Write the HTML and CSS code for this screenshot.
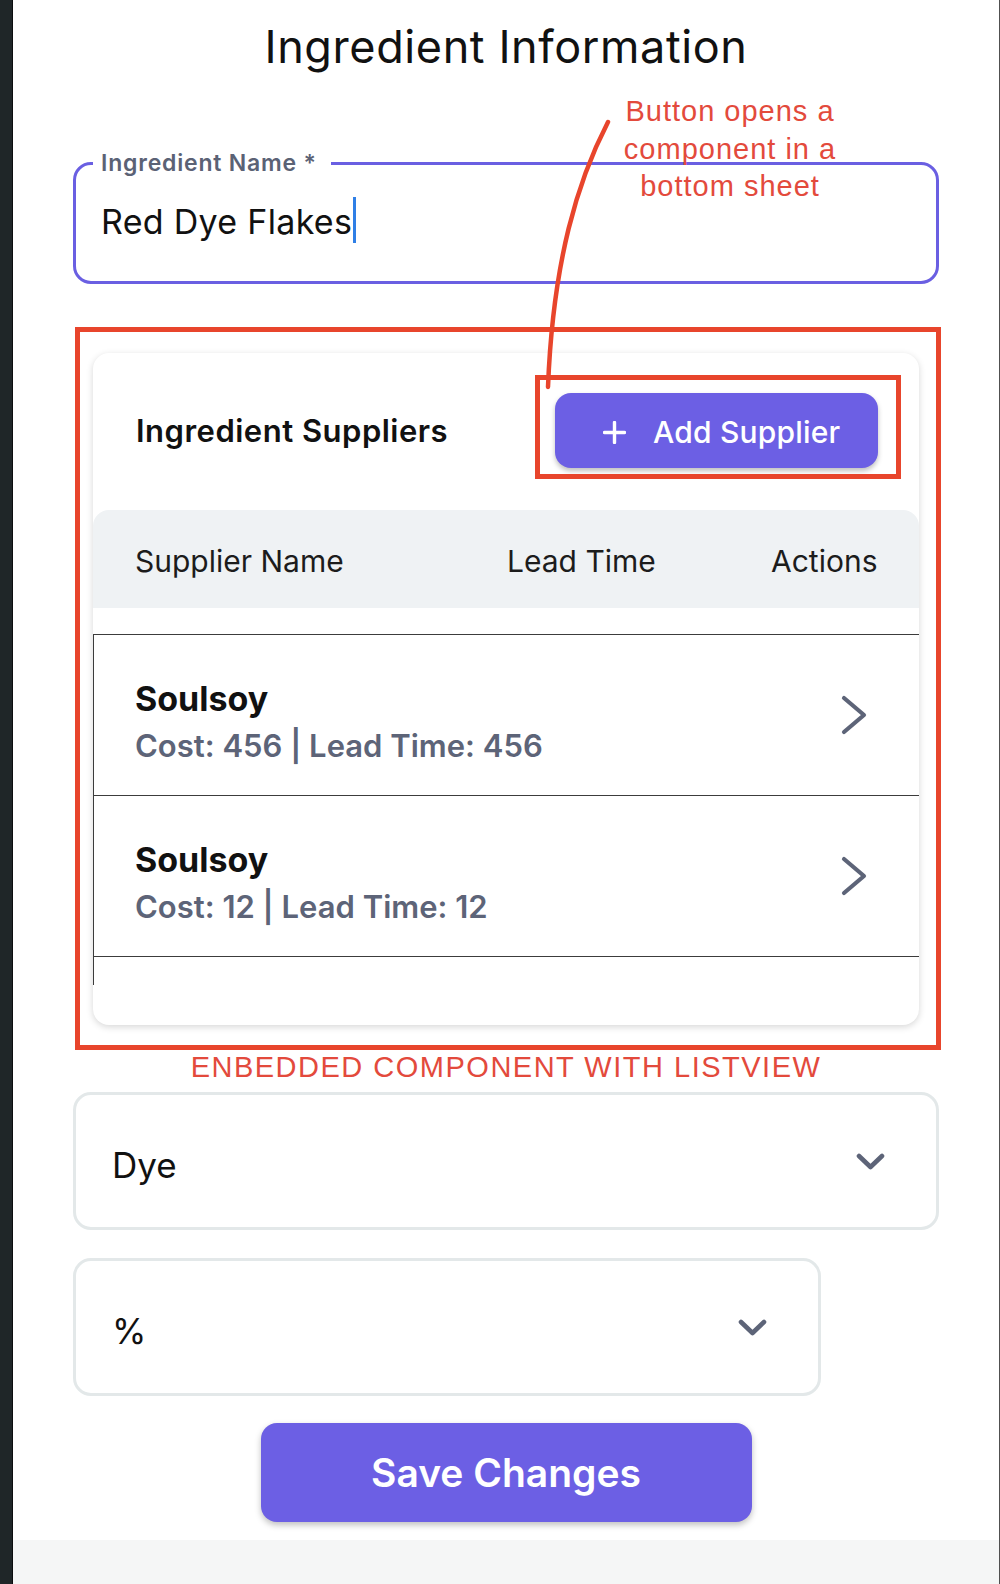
FILE: index.html
```html
<!DOCTYPE html>
<html lang="en">
<head>
<meta charset="utf-8">
<title>Ingredient Information</title>
<link rel="stylesheet" href="styles.css">
</head>
<body>
<div class="frame">
  <div class="strip"></div>
  <main class="page">
    <h1 class="title">Ingredient Information</h1>

    <fieldset class="name-field">
      <legend class="name-label">Ingredient Name *</legend>
      <div class="name-value">Red Dye Flakes<span class="caret"></span></div>
    </fieldset>

    <div class="embed-frame">
      <section class="card">
        <div class="card-head">
          <h2 class="card-title">Ingredient Suppliers</h2>
          <button class="add-btn" type="button">
            <svg class="plus" width="23" height="23" viewBox="0 0 23 23"><path d="M11.5 1.5V21.5M1.5 11.5H21.5" stroke="#fff" stroke-width="3.4" stroke-linecap="round"/></svg>
            <span>Add Supplier</span>
          </button>
        </div>
        <div class="table-head">
          <span>Supplier Name</span>
          <span>Lead Time</span>
          <span>Actions</span>
        </div>
        <ul class="list">
          <li class="row">
            <div class="row-text">
              <div class="row-name">Soulsoy</div>
              <div class="row-meta">Cost: 456 | Lead Time: 456</div>
            </div>
            <svg class="chev-right" width="26" height="40" viewBox="0 0 26 40"><path d="M3 3L23 20L3 37" fill="none" stroke="#5d6478" stroke-width="4.2" stroke-linecap="round" stroke-linejoin="round"/></svg>
          </li>
          <li class="row">
            <div class="row-text">
              <div class="row-name">Soulsoy</div>
              <div class="row-meta">Cost: 12 | Lead Time: 12</div>
            </div>
            <svg class="chev-right" width="26" height="40" viewBox="0 0 26 40"><path d="M3 3L23 20L3 37" fill="none" stroke="#5d6478" stroke-width="4.2" stroke-linecap="round" stroke-linejoin="round"/></svg>
          </li>
        </ul>
      </section>
    </div>

    <p class="embed-note">ENBEDDED COMPONENT WITH LISTVIEW</p>

    <div class="select select-wide">
      <span class="select-value">Dye</span>
      <svg class="chev-down" width="29" height="17" viewBox="0 0 29 17"><path d="M3 3L14.5 14L26 3" fill="none" stroke="#5d6478" stroke-width="4.6" stroke-linecap="round" stroke-linejoin="round"/></svg>
    </div>
    <div class="select select-narrow">
      <span class="select-value">%</span>
      <svg class="chev-down" width="29" height="17" viewBox="0 0 29 17"><path d="M3 3L14.5 14L26 3" fill="none" stroke="#5d6478" stroke-width="4.6" stroke-linecap="round" stroke-linejoin="round"/></svg>
    </div>

    <button class="save" type="button">Save Changes</button>

    <div class="footer"></div>

    <div class="note">Button opens a<br>component in a<br>bottom sheet</div>
    <svg class="curve" width="986" height="420" viewBox="0 0 986 420"><path d="M595 122C565 180 540 260 535 387" fill="none" stroke="#e8452c" stroke-width="4.5" stroke-linecap="round"/></svg>
    <div class="btn-callout"></div>
  </main>
</div>
</body>
</html>
```

FILE: styles.css
```css
* { box-sizing: border-box; }

html, body {
  margin: 0;
  padding: 0;
  background: #ffffff;
}

body {
  font-family: Inter, "Noto Sans", sans-serif;
  color: #111111;
}

.frame {
  display: flex;
  height: 1584px;
  overflow: hidden;
}

.strip {
  width: 13px;
  flex: none;
  background: #1f2628;
  border-right: 1px solid #0b0d0e;
}

.page {
  position: relative;
  flex: 1;
  display: flex;
  flex-direction: column;
  padding: 21px 60px 0;
  border-right: 1px solid #505050;
  background: #ffffff;
}

.title {
  margin: 0;
  font-weight: 400;
  font-size: 45px;
  line-height: 52px;
  letter-spacing: 0.6px;
  text-align: center;
  color: #111111;
}

/* Outlined text field */
.name-field {
  margin: 77px 0 0;
  padding: 21px 0 37px 17px;
  min-width: 0;
  border: 3px solid #6a5fe2;
  border-radius: 18px;
}

.name-label {
  padding: 0 14px 0 8px;
  font-weight: 600;
  font-size: 23px;
  line-height: 26px;
  letter-spacing: 0.8px;
  color: #5b6275;
}

.name-value {
  margin-left: 8px;
  font-size: 34px;
  line-height: 44px;
  letter-spacing: 0.3px;
  color: #111111;
}

.caret {
  display: inline-block;
  width: 3px;
  height: 46px;
  margin-left: 1px;
  vertical-align: -9px;
  background: #2f7fe6;
}

/* Embedded component frame */
.embed-frame {
  margin: 43px -2px 0 2px;
  padding: 21px 17px 20px 13px;
  border: 5px solid #e8452c;
}

.card {
  background: #ffffff;
  border-radius: 16px;
  box-shadow: 0 2px 7px rgba(0, 0, 0, 0.16);
  padding-bottom: 40px;
}

.card-head {
  display: flex;
  align-items: center;
  justify-content: space-between;
  padding: 40px 41px 42px 43px;
}

.card-title {
  margin: 0;
  font-weight: 600;
  font-size: 31px;
  line-height: 36px;
  letter-spacing: 0.5px;
  color: #111111;
}

.add-btn {
  display: flex;
  align-items: center;
  gap: 27px;
  width: 323px;
  height: 75px;
  padding: 3px 0 0 48px;
  border: none;
  border-radius: 16px;
  background: #6c5fe4;
  color: #ffffff;
  font-family: inherit;
  font-weight: 500;
  font-size: 30px;
  line-height: 36px;
  letter-spacing: 0.2px;
  box-shadow: 0 3px 5px rgba(0, 0, 0, 0.25);
}

.plus { flex: none; }

.table-head {
  display: grid;
  grid-template-columns: 372px 264px auto;
  height: 98px;
  padding: 33px 0 0 42px;
  background: #eff2f4;
  border-radius: 16px 16px 0 0;
  font-size: 30px;
  line-height: 36px;
  color: #1c1c1c;
}

.list {
  margin: 26px 0 0;
  padding: 0 0 28px;
  list-style: none;
  border-top: 1px solid #3c3c3c;
  border-left: 1px solid #3c3c3c;
}

.row {
  display: flex;
  align-items: flex-start;
  justify-content: space-between;
  height: 161px;
  padding: 44px 52px 0 41px;
  border-bottom: 1px solid #3c3c3c;
}

.row-name {
  font-weight: 700;
  font-size: 34px;
  line-height: 40px;
  color: #111111;
}

.row-meta {
  margin-top: 8px;
  font-weight: 600;
  font-size: 31px;
  line-height: 38px;
  color: #5d6478;
}

.chev-right {
  align-self: center;
  margin-top: -44px;
}

.embed-note {
  margin: 0;
  font-family: "Liberation Sans", Arial, sans-serif;
  font-size: 29px;
  line-height: 34px;
  letter-spacing: 1.5px;
  text-align: center;
  color: #e34a3c;
}

/* Dropdowns */
.select {
  display: flex;
  align-items: center;
  justify-content: space-between;
  height: 138px;
  padding: 0 51px 0 36px;
  border: 3px solid #e3e8e9;
  border-radius: 18px;
  font-size: 35px;
  line-height: 40px;
  color: #111111;
}

.select-wide { margin-top: 8px; }

.select-narrow {
  width: 748px;
  margin-top: 28px;
}

.select-value { margin-top: 8px; }

.save {
  align-self: center;
  width: 491px;
  height: 99px;
  margin-top: 27px;
  border: none;
  border-radius: 16px;
  background: #6c5fe4;
  color: #ffffff;
  font-family: inherit;
  font-weight: 600;
  font-size: 39px;
  box-shadow: 0 3px 6px rgba(0, 0, 0, 0.25);
}

.footer {
  margin: auto -60px 0;
  height: 44px;
  background: #f5f6f6;
}

/* Annotation overlays */
.note {
  position: absolute;
  left: 597px;
  top: 93px;
  width: 240px;
  font-family: "Liberation Sans", Arial, sans-serif;
  font-size: 29px;
  line-height: 37.5px;
  letter-spacing: 1px;
  text-align: center;
  color: #e34a3c;
}

.curve {
  position: absolute;
  left: 0;
  top: 0;
  pointer-events: none;
}

.btn-callout {
  position: absolute;
  left: 522px;
  top: 375px;
  width: 366px;
  height: 104px;
  border: 5px solid #e8452c;
}
```
